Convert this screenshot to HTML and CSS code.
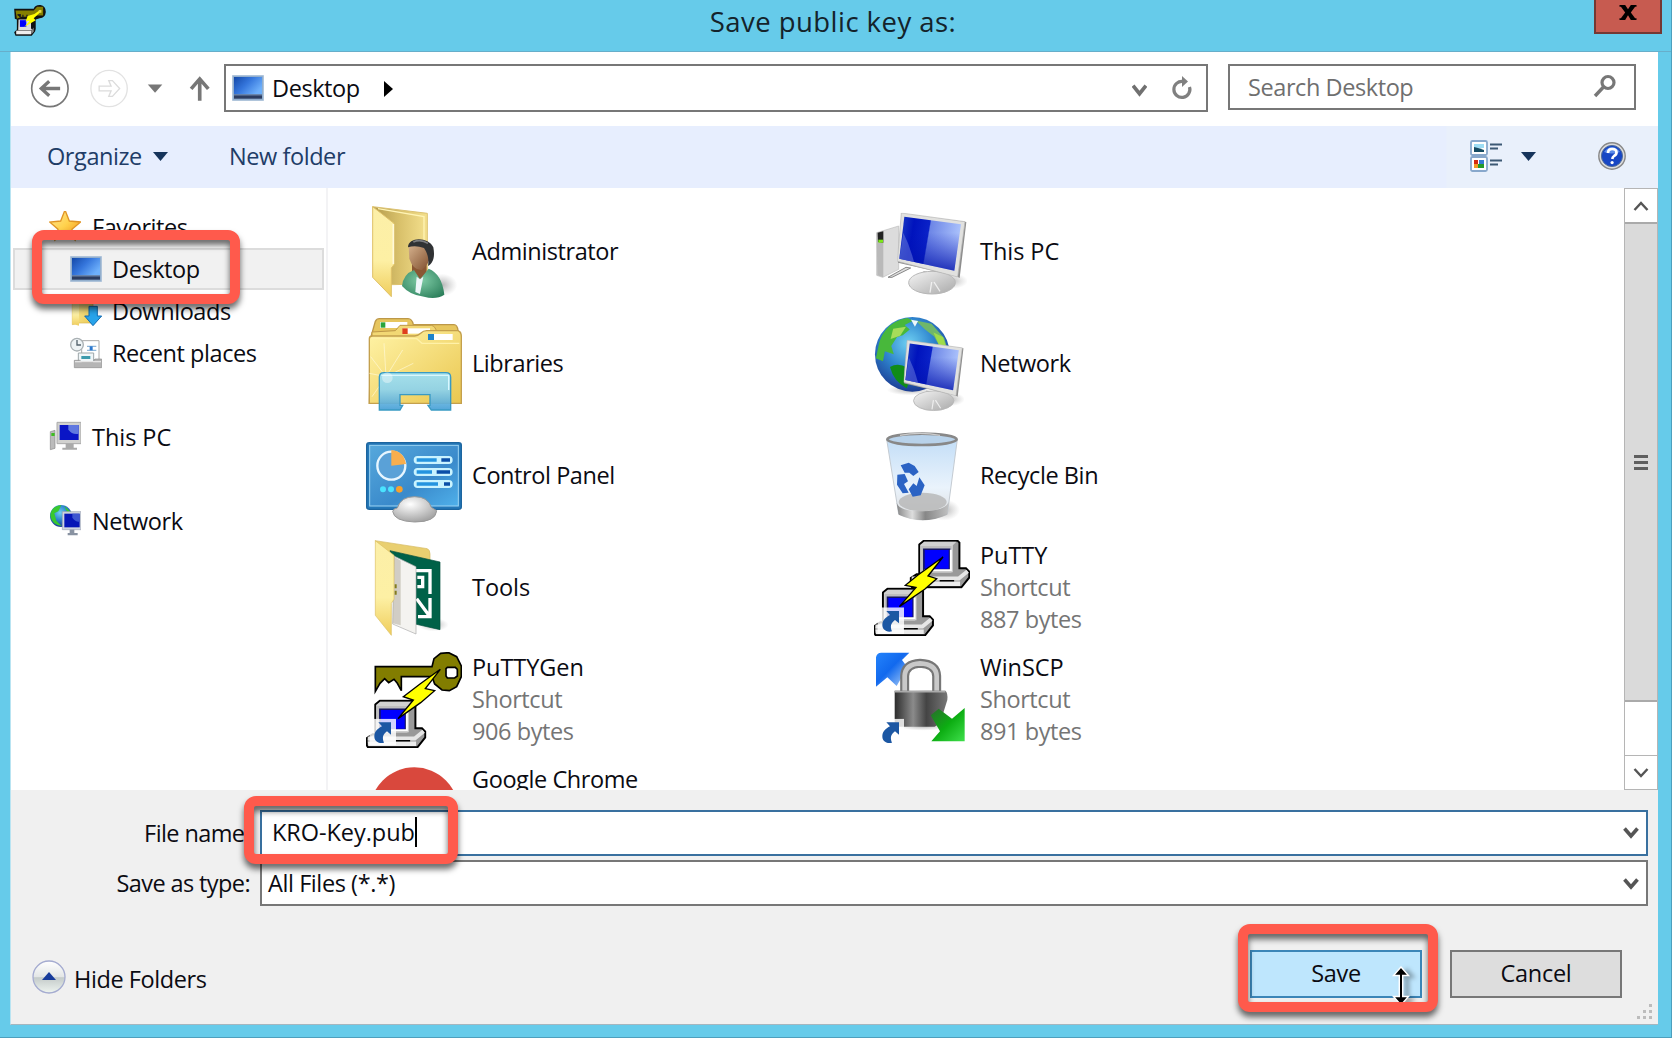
FILE: index.html
```html
<!DOCTYPE html>
<html lang="en">
<head>
<meta charset="utf-8">
<title>Save public key as:</title>
<link rel="stylesheet" href="styles.css">
</head>
<body>
<svg class="defs" width="0" height="0">
  <defs>
    <linearGradient id="folder" x1="0" y1="0" x2="1" y2="1"><stop offset="0" stop-color="#fff3a6"/><stop offset="1" stop-color="#eac750"/></linearGradient>
    <linearGradient id="flap" x1="0" y1="0" x2="0" y2="1"><stop offset="0" stop-color="#fcefa8"/><stop offset=".6" stop-color="#fdf0a4"/><stop offset="1" stop-color="#efcd5c"/></linearGradient>
    <linearGradient id="inside" x1="0" y1="0" x2="1" y2="0"><stop offset="0" stop-color="#b39b4c"/><stop offset=".5" stop-color="#d9c16b"/><stop offset="1" stop-color="#f4e08d"/></linearGradient>
    <linearGradient id="screen" x1="0" y1="0" x2="1" y2=".15"><stop offset="0" stop-color="#1c3fc4"/><stop offset=".25" stop-color="#0013bd"/><stop offset=".5" stop-color="#0a22c8"/><stop offset=".52" stop-color="#6d86e6"/><stop offset="1" stop-color="#a9c0fb"/></linearGradient>
    <linearGradient id="screenshade" x1="0" y1="0" x2="0" y2="1"><stop offset=".3" stop-color="#0010b8" stop-opacity="0"/><stop offset="1" stop-color="#0010a8" stop-opacity=".8"/></linearGradient>
    <linearGradient id="metal" x1="0" y1="0" x2="1" y2="1"><stop offset="0" stop-color="#f5f5f5"/><stop offset="1" stop-color="#a9a9a9"/></linearGradient>
    <linearGradient id="desk" x1="0" y1="0" x2="1" y2=".6"><stop offset="0" stop-color="#1348a8"/><stop offset=".5" stop-color="#3576dc"/><stop offset="1" stop-color="#6eb0fb"/></linearGradient>
    <radialGradient id="globe" cx=".45" cy=".35" r=".65"><stop offset="0" stop-color="#6fd0f2"/><stop offset=".5" stop-color="#2f86cf"/><stop offset="1" stop-color="#1b3c94"/></radialGradient>
    <linearGradient id="glass" x1="0" y1="0" x2="0" y2="1"><stop offset="0" stop-color="#9fe0f3"/><stop offset=".45" stop-color="#8ed3ec"/><stop offset="1" stop-color="#479fd6"/></linearGradient>
    <linearGradient id="panel" x1="0" y1="0" x2="1" y2="1"><stop offset="0" stop-color="#56a8dc"/><stop offset=".6" stop-color="#3a8acb"/><stop offset="1" stop-color="#4fb0ea"/></linearGradient>
    <radialGradient id="knob" cx=".4" cy=".3" r=".7"><stop offset="0" stop-color="#fff"/><stop offset="1" stop-color="#a5a5a5"/></radialGradient>
    <linearGradient id="lock" x1="0" y1="0" x2="1" y2="0"><stop offset="0" stop-color="#2c2c2c"/><stop offset=".35" stop-color="#8b8b8b"/><stop offset=".6" stop-color="#444"/><stop offset="1" stop-color="#777"/></linearGradient>
    <linearGradient id="rim" x1="0" y1="0" x2="1" y2="0"><stop offset="0" stop-color="#777"/><stop offset=".3" stop-color="#ddd"/><stop offset=".55" stop-color="#777"/><stop offset="1" stop-color="#bbb"/></linearGradient>
    <linearGradient id="binfill" x1="0" y1="0" x2="0" y2="1"><stop offset="0" stop-color="#c3def7"/><stop offset=".6" stop-color="#eaf3fc"/><stop offset="1" stop-color="#dcdcdc"/></linearGradient>
    <linearGradient id="skin" x1="0" y1="0" x2="1" y2="1"><stop offset="0" stop-color="#d6b28e"/><stop offset="1" stop-color="#7d4c2b"/></linearGradient>
    <radialGradient id="shirt" cx=".45" cy=".4" r=".7"><stop offset="0" stop-color="#7fcca6"/><stop offset="1" stop-color="#2c7f5b"/></radialGradient>
    <radialGradient id="shade"><stop offset="0" stop-color="#777" stop-opacity=".55"/><stop offset="1" stop-color="#999" stop-opacity="0"/></radialGradient>
    <linearGradient id="blueArrow" x1="0" y1="0" x2="1" y2="1"><stop offset="0" stop-color="#2483fb"/><stop offset=".45" stop-color="#1169ee"/><stop offset="1" stop-color="#b8d7f8"/></linearGradient>
    <linearGradient id="greenArrow" x1="0" y1="0" x2="1" y2="1"><stop offset="0" stop-color="#2b6b2e"/><stop offset=".5" stop-color="#0cad12"/><stop offset="1" stop-color="#3fe04c"/></linearGradient>
    <linearGradient id="orb" x1="0" y1="0" x2="0" y2="1"><stop offset="0" stop-color="#fff"/><stop offset=".5" stop-color="#e3e6e6"/><stop offset=".52" stop-color="#c4cbca"/><stop offset="1" stop-color="#eef4ef"/></linearGradient>
    <linearGradient id="star" x1="0" y1="0" x2="1" y2="1"><stop offset="0" stop-color="#ffe79a"/><stop offset=".5" stop-color="#ffd24d"/><stop offset="1" stop-color="#f28c13"/></linearGradient>

    <symbol id="desktop-icon" viewBox="0 0 96 78">
      <rect x="2" y="2" width="92" height="74" fill="#8faccb" stroke="#a8bfd8" stroke-width="3"/>
      <rect x="6" y="6" width="84" height="52" fill="url(#desk)"/>
      <rect x="6" y="59" width="84" height="12" fill="#2c3d61"/><path d="M6 60h84" stroke="#6d84a8" stroke-width="3"/>
    </symbol>
    <symbol id="shortcut" viewBox="0 0 80 80">
      <rect width="80" height="80" fill="#fff" fill-opacity=".82"/>
      <path d="M27 11h38v37l-12-10c-13 9-15 20-9 34C26 76 14 66 15 51c1-13 11-22 23-28z" fill="#1c57a3"/>
    </symbol>
    <!-- classic beige computer -->
    <symbol id="retro-pc" viewBox="0 0 186 150">
      <path d="M30 16L44 4H146L152 10V88H172L182 98V116L158 146H8L4 140V118L22 106H30z" fill="#999" stroke="#000" stroke-width="6"/>
      <path d="M33 17L45 7H143L132 18V100H33z" fill="#d1d1d1"/>
      <path d="M36 20H128V102H36z" fill="#bdbdbd"/>
      <path d="M44 30H122V92H44z" fill="#00f" stroke="#151560" stroke-width="5"/>
      <path d="M46 94H126V32" fill="none" stroke="#fff" stroke-width="6"/>
      <path d="M7 119H150L177 97" fill="none" stroke="#e6e6e6" stroke-width="12"/>
      <path d="M7 128H154V142H9z" fill="#ececec"/><path d="M92 126H136" stroke="#000" stroke-width="5"/>
    </symbol>
    <symbol id="monitor" viewBox="0 0 210 250">
      <ellipse cx="160" cy="205" rx="52" ry="24" fill="url(#shade)"/>
      <path d="M78 175L132 185L132 215H82z" fill="#aaa"/>
      <ellipse cx="104" cy="210" rx="70" ry="34" fill="url(#metal)" stroke="#b7b7b7" stroke-width="3"/>
      <path d="M103 208L98 240M110 208L128 236" stroke="#fff" stroke-width="4" opacity=".7"/>
      <path d="M14 4L207 28L187 196L176 190L2 150z" fill="#8d8d8d"/>
      <path d="M12 1L203 27L181 193L0 146z" fill="#e1e1df" stroke="#b5b5b5" stroke-width="2"/>
      <path d="M21 12L191 35L171 174L6 138z" fill="url(#screen)"/>
      <path d="M21 12L191 35L171 174L6 138z" fill="url(#screenshade)"/>
      <path d="M18 60Q38 100 50 148L6 138z" fill="#9eaef0" opacity=".35"/>
    </symbol>
    <symbol id="world" viewBox="0 0 240 240">
      <circle cx="120" cy="120" r="117" fill="url(#globe)"/>
      <path d="M14 95C25 38 65 12 105 6L122 15 96 28 112 42 90 60 72 66 54 94 62 120 34 110 28 142 6 132z" fill="#48b83b"/>
      <path d="M60 40L100 34 82 62 52 72z" fill="#a6dc5a"/>
      <path d="M50 160Q75 144 104 162L118 190 102 226Q62 206 50 160z" fill="#108c18"/>
      <path d="M130 14L180 24 220 70 232 110 206 96 188 64 160 42z" fill="#6fb76a"/>
      <path d="M186 52L216 66 228 104 206 96z" fill="#9edc4a"/>
      <path d="M116 12L138 16 128 34z" fill="#edf8fa"/>
    </symbol>
  </defs>
</svg>

<div class="window">
  <header class="titlebar">
    <svg class="app-icon" viewBox="42 12 98 98">
      <path d="M44 26H102Q106 14 122 15Q138 18 138 36Q136 54 120 54L108 58V86L106 94 96 106H48L44 96 52 88V58L46 56z" fill="#111"/>
      <path d="M48 31H102L112 20H130V46H112L92 50H66L52 56z" fill="#857f00"/><path d="M54 44h8v7M70 44v7M82 44v7" stroke="#222" stroke-width="4"/>
      <path d="M57 58H94V84L98 90H56z" fill="#ddd"/><path d="M61 60H80V80H61z" fill="#00f"/>
      <path d="M50 91H94V102H50z" fill="#eee"/><path d="M94 92L102 82V94L95 102z" fill="#888"/>
      <path d="M122 29L104 42 84 48 78 64 90 62 74 80 108 60 102 54 122 36z" fill="#ff0"/>
      <path d="M117 30h8v8h-8z" fill="#e9d94b"/>
    </svg>
    <h1 class="title">Save public key as:</h1>
    <button class="close" aria-label="Close"><svg viewBox="0 0 20 18"><path d="M1 1H7L10 5.500 13 1H19V3H17.500L13 9 17.500 15H19V17H13L10 12 7 17H1V15H2.500L7 9 2.500 3H1z"/></svg></button>
  </header>

  <main class="client">
    <nav class="navrow">
      <svg class="nav-arrows" viewBox="84 200 552 130">
        <g fill="none">
          <circle cx="148" cy="265" r="55" stroke="#777" stroke-width="5"/>
          <path d="M179 265H124M146 243L122 265L146 287" stroke="#777" stroke-width="10"/>
          <circle cx="327" cy="265" r="55" stroke="#e2e2e2" stroke-width="4"/>
          <path d="M297 258H333L326 241H337L359 265L337 289H326L333 272H297z" stroke="#dcdcdc" stroke-width="4"/>
          <path d="M601 302V238M575 266L601 236L627 266" stroke="#777" stroke-width="11"/>
        </g>
        <path d="M444 253H488L466 278z" fill="#777"/>
      </svg>
      <div class="address">
        <svg class="desk-lg"><use href="#desktop-icon"/></svg>
        <span class="crumb">Desktop</span>
        <svg class="crumb-arrow" viewBox="0 0 9 16"><path d="M0 0L9 8L0 16z"/></svg>
        <svg class="chev" viewBox="0 0 14 12"><path d="M1 1.500L7 9L13 1.500" fill="none" stroke="#707070" stroke-width="3.400"/></svg>
        <svg class="refresh" viewBox="0 0 22 24"><path d="M12 5.500A8 8 0 1 0 18.500 11" fill="none" stroke="#808080" stroke-width="3.200"/><path d="M11 0L17 5.500L11 11z" fill="#808080"/></svg>
      </div>
      <div class="search">
        <span>Search Desktop</span>
        <svg class="lens" viewBox="0 0 24 24"><circle cx="15" cy="8.500" r="6" fill="none" stroke="#777" stroke-width="3.200"/><path d="M10.500 13L2 22" stroke="#777" stroke-width="3.400"/></svg>
      </div>
    </nav>

    <div class="toolbar">
      <span class="organize">Organize</span>
      <svg class="tri" viewBox="0 0 15 9"><path d="M0 0H15L7.500 9z"/></svg>
      <span class="newfolder">New folder</span>
      <div class="tools">
        <svg class="view-icon" viewBox="0 0 34 34">
          <g fill="#fff" stroke="#88a8cc" stroke-width="1.800"><rect x="1" y="2" width="16" height="14" rx="1.500"/><rect x="1" y="18" width="16" height="14" rx="1.500"/></g>
          <path d="M4 5H14V9H4z" fill="#9eddf4"/><path d="M4 8Q9 9 14 11V13H4z" fill="#164b62"/>
          <path d="M4 21H8V25H4z" fill="#d42b12"/><path d="M9 21H14V25H9z" fill="#347bd2"/><path d="M4 25H9V29H4z" fill="#f39a26"/><path d="M8 25H14V29H8z" fill="#239a2b"/>
          <path d="M20 5.500H32M20 9.500H28M20 21.500H32M20 25.500H28" stroke="#3c5874" stroke-width="2.200"/>
        </svg>
        <svg class="tri tri-view" viewBox="0 0 15 9"><path d="M0 0H15L7.500 9z"/></svg>
        <svg class="help" viewBox="0 0 28 28"><circle cx="14" cy="14" r="13.200" fill="#dcdcdc" stroke="#888" stroke-width="1.400"/><circle cx="14" cy="14" r="10.600" fill="#1746c4" stroke="#546f9c"/><path d="M6 10Q14 0 22 10Q14 13 6 10z" fill="#5b8be8"/><path d="M10 11Q10 7 14.200 7Q18.500 7 18.500 10.500Q18.500 12.800 16 14Q14.500 15 14.300 17" fill="none" stroke="#fff" stroke-width="2.700"/><circle cx="14.100" cy="20.600" r="1.600" fill="#fff"/></svg>
      </div>
    </div>

    <section class="browser">
      <aside class="places">
        <div class="place">
          <svg viewBox="148 64 96 96"><path d="M196 61L209 94 243 97 217 119 226 151 196 133 166 151 175 119 150 97 183 94z" fill="url(#star)" stroke="#e09526" stroke-width="4"/></svg>
          <span>Favorites</span>
        </div>
        <div class="place child selected"><svg class="short"><use href="#desktop-icon"/></svg><span>Desktop</span></div>
        <div class="place child">
          <svg viewBox="211 316 96 96"><path d="M218 325H254L262 334H280V400H240L218 405z" fill="url(#folder)" stroke="#d8b653" stroke-width="2"/><path d="M218 325L238 336V408L218 402z" fill="url(#flap)"/><path d="M268 350H293V379H306L280 408 255 379H268z" fill="#27a3ea" stroke="#126bb2" stroke-width="3"/></svg>
          <span>Downloads</span>
        </div>
        <div class="place child">
          <svg viewBox="211 442 96 96"><path d="M246 453H298V510H246z" fill="#fff" stroke="#aaa" stroke-width="3"/><path d="M262 470H290M262 482H290" stroke="#8fb6d8" stroke-width="4"/><path d="M270 470h9v12h-9z" fill="#2d79d0"/><path d="M236 490H282V516H236z" fill="#f0f6f8" stroke="#9da7a9" stroke-width="3"/><path d="M245 499H272V508H245z" fill="#3d9bad"/><path d="M224 512H240L248 518H280L286 508H306V534H224z" fill="#b5b5b5" stroke="#8d8d8d" stroke-width="2"/><path d="M226 516H304" stroke="#e5e5e5" stroke-width="4"/><circle cx="232" cy="465" r="19" fill="#eef3f5" stroke="#a9b0b3" stroke-width="4"/><path d="M232 451V466H244" fill="none" stroke="#54636c" stroke-width="4"/></svg>
          <span>Recent places</span>
        </div>
        <div class="place gap">
          <svg viewBox="148 694 96 96"><path d="M152 726L166 722V776L152 780z" fill="#bbb" stroke="#888" stroke-width="2"/><path d="M155 730h10v9h-10z" fill="#3dbd20"/><path d="M198 760H222V774H232V780H188V774H198z" fill="#aaa"/><path d="M172 698H244V762H172z" fill="#d1d1cf" stroke="#aaa" stroke-width="3"/><path d="M180 706H237V751H180z" fill="#0a15c6"/><path d="M206 706H237V732Q218 736 206 720z" fill="#6078e0"/></svg>
          <span class="wide">This PC</span>
        </div>
        <div class="place gap">
          <svg viewBox="148 946 96 96"><circle cx="184" cy="979" r="33" fill="url(#globe)"/><path d="M152 979C152 957 170 947 185 947L176 965 164 971 170 993 186 1009Q158 1007 152 979M194 949L216 969 206 975z" fill="#38c92f"/><path d="M210 1018H224V1030H234V1037H204V1030H210z" fill="#8993a2"/><path d="M188 966H244V1020H188z" fill="#cfd5df" stroke="#9aa1b3" stroke-width="2"/><path d="M194 972H240V1013H194z" fill="#0716b7"/><path d="M218 972H240V996Q228 998 218 984z" fill="#3d55d0"/></svg>
          <span>Network</span>
        </div>
      </aside>

      <div class="files">
        <article class="file">
          <svg viewBox="48 42 288 288">
            <ellipse cx="276" cy="285" rx="46" ry="34" fill="url(#shade)"/>
            <path d="M68 50L232 70V282L122 284z" fill="url(#inside)" stroke="#dcc271" stroke-width="3"/>
            <path d="M84 56L222 80V260" fill="none" stroke="#fff4b5" stroke-width="4"/>
            <path d="M68 50L132 100V224L124 234V320L68 262z" fill="url(#flap)" stroke="#dfc168" stroke-width="3"/>
            <path d="M130 102V222" stroke="#fff9d8" stroke-width="5"/>
            <path d="M186 220H230V275H186z" fill="#8a5734"/>
            <path d="M156 288Q160 252 192 240L210 268 236 236Q276 252 283 314Q258 330 222 320Q180 316 156 288z" fill="url(#shirt)"/>
            <path d="M200 260L210 268 220 260 210 312 196 306z" fill="#eef6fa"/>
            <path d="M176 170Q208 156 242 176Q246 214 216 240Q190 242 178 206z" fill="url(#skin)"/>
            <path d="M174 172C174 140 236 140 250 172C256 204 248 220 234 228C238 202 230 186 222 174Q196 164 174 172z" fill="#303234"/>
            <path d="M190 156Q212 146 234 160" stroke="#7b7d80" stroke-width="5" fill="none"/>
          </svg>
          <div class="meta"><b>Administrator</b></div>
        </article>
        <article class="file">
          <svg viewBox="42 42 288 288">
            <path d="M84 262L138 232 152 234 96 262z" fill="#ddd" stroke="#888" stroke-width="3"/>
            <path d="M50 128L70 122 116 108V238L68 262 50 256z" fill="#dcdcdc" stroke="#bbb" stroke-width="2"/>
            <path d="M50 128L70 122V262L52 256z" fill="#b9b9b9"/><path d="M53 128L70 124V158L54 156z" fill="#222"/><path d="M55 149h14v9H55z" fill="#7bea17"/>
            <use href="#monitor" x="112" y="68" width="210" height="250"/>
          </svg>
          <div class="meta"><b class="wide">This PC</b></div>
        </article>
        <article class="file">
          <svg viewBox="48 378 288 288">
            <path d="M62 444L76 394Q80 386 88 386H174Q186 386 190 404H312Q322 404 324 422L334 440V640H58z" fill="#e7c65e" stroke="#bd9848" stroke-width="4"/>
            <path d="M90 396H172V414H90z" fill="#fff"/><path d="M92 397h14v16H92z" fill="#29a43c"/>
            <path d="M66 426L136 422 150 406H244Q256 408 260 426H332V446H66z" fill="#f2d874" stroke="#bd9848" stroke-width="3"/>
            <path d="M158 415H240V431H158z" fill="#fff"/><path d="M157 415h16v17h-16z" fill="#df401c"/>
            <path d="M58 446Q58 438 68 438H194Q204 438 212 430Q220 422 230 422H324Q334 426 334 440V640H58z" fill="url(#folder)" stroke="#c4a04d" stroke-width="4"/>
            <path d="M64 446H200L216 460H328" fill="none" stroke="#fff1a8" stroke-width="4"/>
            <path d="M236 432H308V450H236z" fill="#fff"/><path d="M234 432h18v18h-18z" fill="#1d83cb"/>
            <g stroke="#fffbe0" stroke-width="3" opacity=".6"><path d="M108 560L102 460M108 560L158 480M108 560L62 500M108 560L190 520M108 560L58 550M108 560L66 620"/></g>
            <path d="M88 562Q88 548 102 548H288Q302 548 302 562V660H244L234 646H240V614H150V646H158L150 660H88z" fill="url(#glass)" stroke="#399ac4" stroke-width="4" fill-opacity=".93"/>
            <path d="M94 556H296V600" fill="none" stroke="#d8f7ff" stroke-width="4"/><circle cx="112" cy="563" r="16" fill="#fff" opacity=".4"/>
          </svg>
          <div class="meta"><b>Libraries</b></div>
        </article>
        <article class="file">
          <svg viewBox="42 378 288 288">
            <ellipse cx="150" cy="600" rx="70" ry="16" fill="url(#shade)"/>
            <use href="#world" x="42" y="378" width="230" height="230"/>
            <use href="#monitor" x="131" y="450" width="182" height="217"/>
          </svg>
          <div class="meta"><b>Network</b></div>
        </article>
        <article class="file">
          <svg viewBox="48 24 288 288">
            <rect x="50" y="68" width="284" height="200" rx="8" fill="#2478b8" stroke="#1c659f" stroke-width="4"/>
            <rect x="59" y="76" width="266" height="182" fill="url(#panel)" stroke="#9cd4f4" stroke-width="3"/>
            <circle cx="124" cy="137" r="42" fill="#5aa1d7" stroke="#e7f6ff" stroke-width="7"/>
            <path d="M124 137V90Q162 94 168 132z" fill="#f8ae4d"/>
            <g stroke-linecap="round"><path d="M203 120H296M203 156H296M203 192H296" stroke="#c9f3ff" stroke-width="24"/></g>
            <path d="M200 120H260M200 156H246M200 192H264" stroke="#2494df" stroke-width="10"/><path d="M274 120H300M260 156H300M282 192H300" stroke="#0b4fa8" stroke-width="10"/>
            <circle cx="99" cy="208" r="9" fill="#4ae3ff"/><circle cx="123" cy="208" r="9" fill="#4ae3ff"/><circle cx="148" cy="208" r="10" fill="#f8a02c"/>
            <path d="M128 274Q132 264 142 264Q152 230 194 230Q234 230 244 262L260 272Q258 306 194 306Q132 304 128 274z" fill="url(#knob)" stroke="#999" stroke-width="3"/>
          </svg>
          <div class="meta"><b>Control Panel</b></div>
        </article>
        <article class="file">
          <svg viewBox="42 24 288 288">
            <ellipse cx="252" cy="270" rx="48" ry="32" fill="url(#shade)"/>
            <path d="M80 58H292L262 282Q188 316 116 282z" fill="url(#binfill)" stroke="#c4cbd2" stroke-width="3"/>
            <ellipse cx="188" cy="246" rx="72" ry="28" fill="#b5b5b5" opacity=".8"/>
            <path d="M110 248Q116 274 188 274Q256 272 266 246L262 284Q188 318 116 284z" fill="url(#rim)" opacity=".85"/>
            <ellipse cx="186" cy="58" rx="104" ry="17" fill="#b8d2ea" stroke="#888" stroke-width="8"/>
            <path d="M120 46Q180 34 240 46" fill="none" stroke="#ccc" stroke-width="4"/>
            <path d="M122 136L146 128 164 138 176 156 160 168 148 158 134 158zM112 164L134 162 144 184 132 192 146 218 128 220 111 194zM178 172L194 196 182 226 158 230 146 208 160 190 170 198z" fill="#2b63c4"/>
          </svg>
          <div class="meta"><b>Recycle Bin</b></div>
        </article>
        <article class="file">
          <svg viewBox="48 360 288 288">
            <ellipse cx="250" cy="614" rx="46" ry="20" fill="url(#shade)"/>
            <path d="M76 362L232 386Q240 390 240 402V560L120 500z" fill="#e9cf70" stroke="#d4b85d" stroke-width="2"/>
            <path d="M120 392L270 426V629L160 604z" fill="#006148" stroke="#034e3c" stroke-width="2"/>
            <path d="M196 452H240V522M202 472H218V500H202M180 462L180 510M200 536L240 590M240 534V590H204" fill="none" stroke="#fff" stroke-width="10"/>
            <path d="M132 408L198 440V642L128 612z" fill="#f4f3f0" stroke="#aaa" stroke-width="2"/><path d="M132 410L152 422V616L128 610z" fill="#a79f91" opacity=".45"/>
            <path d="M76 362L132 406V538L124 550V646L76 586z" fill="url(#flap)" stroke="#dcc060" stroke-width="2"/>
            <path d="M134 493h6v12h-6zM134 512h6v12h-6z" fill="#837c1d"/>
          </svg>
          <div class="meta"><b class="wide">Tools</b></div>
        </article>
        <article class="file">
          <svg viewBox="42 360 288 288">
            <use href="#retro-pc" x="148" y="358" width="184" height="148"/>
            <use href="#retro-pc" x="39" y="502" width="184" height="148"/>
            <path d="M249 411L174 465 136 496 168 502 118 560 194 508 230 476 204 468z" fill="#ff0" stroke="#000" stroke-width="4"/>
            <use href="#shortcut" x="52" y="562" width="80" height="80"/>
          </svg>
          <div class="meta"><b class="wide">PuTTY</b><i>Shortcut</i><i>887 bytes</i></div>
        </article>
        <article class="file">
          <svg viewBox="48 36 288 288">
            <path d="M76 80H246L252 56 272 40 296 38 320 50 334 78V110L320 140 298 152 276 150 254 132 246 110H154V152L142 130 132 118 116 128 104 116 90 130 76 154z" fill="#827d00" stroke="#000" stroke-width="5"/>
            <path d="M292 82H316L322 88V108L314 114H292L288 108V86z" fill="#fff" stroke="#000" stroke-width="5"/>
            <use href="#retro-pc" x="46" y="178" width="184" height="148"/>
            <path d="M271 88L210 132 160 170 190 180 144 236 212 188 254 152 226 146z" fill="#ff0" stroke="#000" stroke-width="4"/>
            <use href="#shortcut" x="58" y="236" width="80" height="80"/>
          </svg>
          <div class="meta"><b class="wide">PuTTYGen</b><i>Shortcut</i><i>906 bytes</i></div>
        </article>
        <article class="file">
          <svg viewBox="42 36 288 288">
            <path d="M48 52Q50 38 64 38H148L126 60 142 82 110 138 82 112 48 140z" fill="url(#blueArrow)"/>
            <path d="M134 156V108Q136 72 180 70Q228 72 230 108V156" fill="none" stroke="#777" stroke-width="27"/>
            <path d="M134 156V108Q136 72 180 70Q228 72 230 108V156" fill="none" stroke="#c9c9c9" stroke-width="14"/>
            <ellipse cx="190" cy="258" rx="76" ry="14" fill="url(#shade)"/>
            <path d="M104 152H256Q264 158 262 180L240 250 224 260H104z" fill="url(#lock)"/>
            <path d="M104 155H256" stroke="#aaa" stroke-width="5"/>
            <path d="M212 226L236 206 276 236 314 204V304H214L240 274z" fill="url(#greenArrow)"/>
            <use href="#shortcut" x="52" y="236" width="80" height="80"/>
          </svg>
          <div class="meta"><b class="wide">WinSCP</b><i>Shortcut</i><i>891 bytes</i></div>
        </article>
        <article class="file partial">
          <svg viewBox="48 372 288 288"><circle cx="193" cy="516" r="134" fill="#d9483d"/></svg>
          <div class="meta"><b>Google Chrome</b></div>
        </article>
      </div>

      <div class="scrollbar">
        <div class="sb-btn"><svg viewBox="0 0 16 12"><path d="M1.500 10L8 3L14.500 10"/></svg></div>
        <div class="thumb"><span></span><span></span><span></span></div>
        <div class="track"></div>
        <div class="sb-btn"><svg viewBox="0 0 16 12"><path d="M1.500 2L8 9L14.500 2"/></svg></div>
      </div>
    </section>

    <footer class="form">
      <div class="field"><label>File name:</label><div class="combo focus"><span class="value wide">KRO-Key.pub</span><span class="caret"></span><svg class="drop" viewBox="0 0 15 13"><path d="M1 1.500L7.500 9L14 1.500"/></svg></div></div>
      <div class="field"><label>Save as type:</label><div class="combo"><span class="value">All Files (*.*)</span><svg class="drop" viewBox="0 0 15 13"><path d="M1 1.500L7.500 9L14 1.500"/></svg></div></div>
      <div class="actions">
        <svg class="orb" viewBox="0 0 34 34"><circle cx="17" cy="17" r="16" fill="url(#orb)" stroke="#a4abd0" stroke-width="1.300"/><path d="M10 20L17 12L24 20z" fill="#183c9b"/></svg>
        <span class="hide">Hide Folders</span>
        <button class="btn primary">Save</button>
        <button class="btn">Cancel</button>
      </div>
      <svg class="grip" viewBox="0 0 16 16"><path d="M12 0h3v3h-3zM6 6h3v3h-3zM12 6h3v3h-3zM0 12h3v3h-3zM6 12h3v3h-3zM12 12h3v3h-3z" fill="#bcbcbc"/></svg>
    </footer>
  </main>

  <svg class="cursor" viewBox="0 0 20 40"><path d="M10 1L17.500 9.500H11.700V30.500H17.500L10 39L2.500 30.500H8.300V9.500H2.500z" fill="#000" stroke="#fff" stroke-width="1.400"/></svg>
  <div class="mark mark-place"></div>
  <div class="mark mark-name"></div>
  <div class="mark mark-save"></div>
</div>
</body>
</html>
```

FILE: styles.css
```css
* { box-sizing: border-box; }
body { margin: 0; background: #66cbea; font-family: "Open Sans", "Noto Sans", sans-serif; font-stretch: 88%; font-size: 23.5px; color: #0b0b12; }
svg { display: block; flex: none; }
.defs { position: absolute; }
.window { position: relative; width: 1672px; height: 1038px; overflow: hidden; display: flex; flex-direction: column; border-right: 1px solid #4d9fbd; border-bottom: 1px solid #4d9fbd; white-space: nowrap; letter-spacing: -.42px; }
.wide { letter-spacing: -.05px; }

.titlebar { height: 52px; display: flex; align-items: flex-start; justify-content: space-between; padding: 0 9px 0 13px; border-bottom: 1px solid #67aeca; }
.app-icon { width: 34px; height: 33px; margin-top: 4px; }
.title { margin: 0 0 0 25px; font-size: 27.500px; font-weight: 400; line-height: 43px; letter-spacing: .45px; color: #14232b; }
.close { width: 68px; height: 34px; margin: 0; padding: 5px 0 0; border: 2px solid #743833; border-top: 0; background: #c75b50; display: flex; justify-content: center; }
.close svg { width: 20px; height: 17px; margin-top: -1px; }

.client { width: 1648px; height: 973px; margin-left: 10px; background: #fff; display: flex; flex-direction: column; border-bottom: 1px solid #a5b6bf; border-left: 1px solid #b9e4f2; }
.navrow { height: 74px; display: flex; padding: 12px 21px 0 17px; }
.nav-arrows { width: 184px; height: 43px; margin-top: 3px; }
.address { width: 984px; height: 48px; margin-left: 12px; border: 2px solid #777; display: flex; align-items: center; padding: 0 13px 0 6px; }
.desk-lg { width: 32px; height: 26px; }
.crumb { margin-left: 8px; }
.crumb-arrow { width: 9px; height: 16px; margin: 2px 0 0 24px; }
.chev { width: 15px; height: 13px; margin: 4px 0 0 auto; }
.refresh { width: 22px; height: 24px; margin-left: 24px; }
.search { width: 408px; height: 46px; margin-left: 20px; border: 2px solid #777; display: flex; align-items: center; justify-content: space-between; padding: 0 17px 0 18px; color: #6f6f6f; }
.lens { width: 24px; height: 24px; margin-bottom: 2px; }

.toolbar { height: 62px; background: linear-gradient(90deg, #e7eefe 1435px, #e9f0fb 1436px); display: flex; align-items: center; padding: 0 32px 3px 36px; color: #213c67; }
.tri { width: 15px; height: 9px; margin: 2px 0 0 11px; fill: #16345b; }
.newfolder { margin-left: 61px; }
.tools { margin-left: auto; display: flex; align-items: center; }
.view-icon { width: 34px; height: 34px; }
.tri-view { margin-left: 17px; }
.help { width: 28px; height: 28px; margin-left: 62px; }

.browser { height: 602px; display: flex; overflow: hidden; }
.places { width: 317px; border-right: 2px solid #f3f3f5; padding-top: 18px; }
.place { height: 42px; display: flex; align-items: center; padding-left: 38px; }
.place svg { width: 32px; height: 32px; margin-right: 11px; }
.place span { margin-top: -1px; }
.place.child { padding-left: 59px; }
.place.child svg { margin-right: 10px; }
.place.selected { width: 311px; margin-left: 2px; padding-left: 55px; border: 2px solid #dcdcdc; background: #f1f1f1; }
.place .short { height: 26px; }
.place.gap { margin-top: 42px; }

.files { width: 1296px; padding: 8px 0 0 38px; display: grid; grid-template-columns: 508px 508px; grid-auto-rows: 112px; }
.file { display: flex; align-items: center; }
.file > svg { width: 96px; height: 96px; margin-right: 10px; }
.meta { display: flex; flex-direction: column; line-height: 32px; padding-bottom: 2px; }
.meta b { font-weight: 400; }
.meta i { font-style: normal; color: #757575; }
.partial .meta { padding-bottom: 66px; }

.scrollbar { width: 34px; display: flex; flex-direction: column; border: 1px solid #b5b5b5; }
.sb-btn { height: 33px; display: flex; align-items: center; justify-content: center; background: #fff; }
.sb-btn svg { width: 16px; height: 12px; fill: none; stroke: #555; stroke-width: 2.400; }
.thumb { height: 480px; background: #dadada; border: solid #aaa; border-width: 2px 0; display: flex; flex-direction: column; align-items: center; justify-content: center; gap: 3px; }
.thumb span { width: 14px; height: 3px; background: #5f5f5f; }
.track { flex: 1; background: #fff; border-bottom: 1px solid #b5b5b5; }

.form { position: relative; height: 234px; background: #f0f0f0; padding-top: 20px; display: flex; flex-direction: column; }
.field { display: flex; align-items: center; height: 46px; margin-bottom: 4px; }
.field label { width: 239px; text-align: right; margin-right: 10px; letter-spacing: -.6px; }
.combo { width: 1388px; height: 46px; border: 2px solid #777; background: #fff; display: flex; align-items: center; padding: 0 7px 0 6px; }
.combo.focus { border-color: #39709f; padding: 0 7px 3px 10px; }
.caret { width: 2px; height: 30px; background: #000; }
.drop { width: 16px; height: 13px; margin: 3px 0 0 auto; fill: none; stroke: #555; stroke-width: 3.600; }
.actions { display: flex; align-items: center; height: 48px; margin-top: 40px; padding-left: 21px; }
.orb { width: 34px; height: 34px; margin-top: 6px; }
.hide { margin: 10px auto 0 8px; }
.btn { width: 172px; height: 48px; padding: 0 0 3px; border: 2px solid #777; background: #ddd; color: #0b0b12; font: inherit; letter-spacing: -.3px; margin-right: 36px; }
.btn.primary { border-color: #3c86b8; background: #bee6fd; margin-right: 28px; }
.grip { position: absolute; right: 5px; bottom: 4px; width: 16px; height: 16px; }

.cursor { position: absolute; left: 1391px; top: 966px; width: 20px; height: 40px; filter: drop-shadow(6px 2px 2px rgba(0, 0, 0, .3)); }
.mark { position: absolute; border: 10px solid #ff5a4c; border-radius: 12px; filter: drop-shadow(0 5px 3px rgba(0, 0, 0, .6)); }
.mark-place { left: 32px; top: 230px; width: 208px; height: 74px; }
.mark-name { left: 244px; top: 796px; width: 214px; height: 68px; }
.mark-save { left: 1238px; top: 924px; width: 200px; height: 88px; }
```
